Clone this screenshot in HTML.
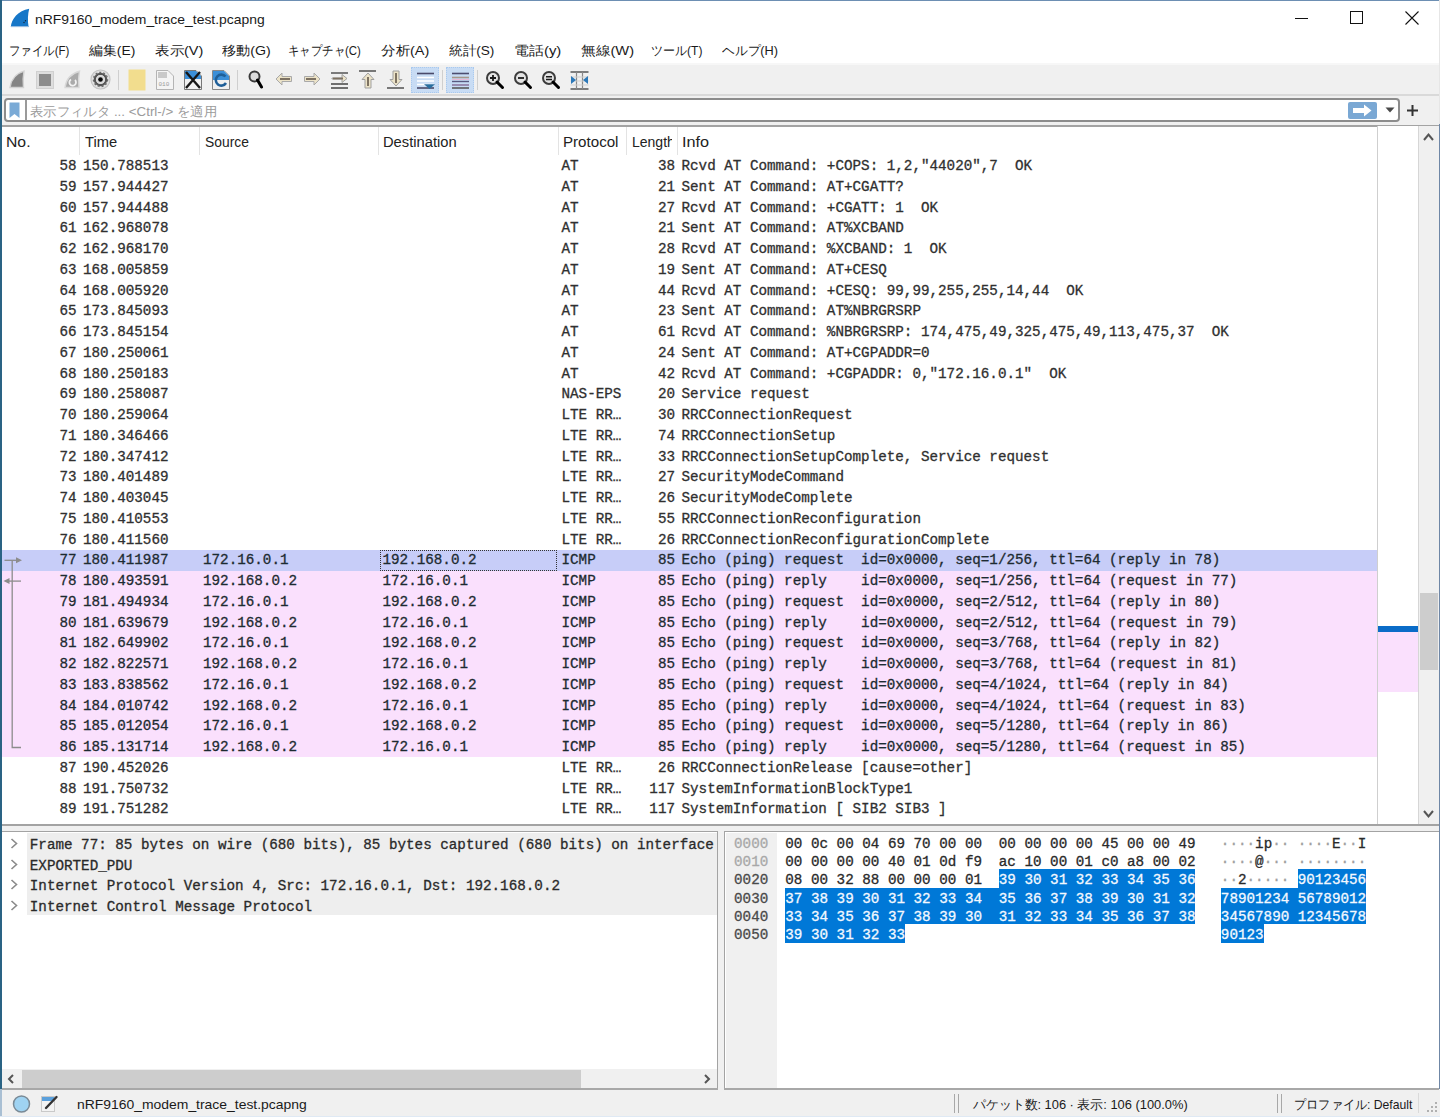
<!DOCTYPE html>
<html><head><meta charset="utf-8"><style>
*{margin:0;padding:0;box-sizing:border-box}
html,body{width:1440px;height:1117px;overflow:hidden;background:#f0f0f0;font-family:"Liberation Sans",sans-serif;color:#000}
.a{position:absolute}
.m{font-family:"Liberation Mono",monospace;font-size:14.25px;white-space:pre;line-height:20px;color:#1c1c1c;-webkit-text-stroke:0.3px currentColor}
.s{white-space:pre}
</style></head><body>

<div class="a" style="left:0;top:0;width:1440px;height:63px;background:#fff"></div>
<div class="a" style="left:0;top:0;width:1440px;height:1px;background:#6d8fb3"></div>
<svg class="a" style="left:10px;top:8px" width="21" height="20" viewBox="0 0 21 20"><path d="M0.8 19 C1.5 11 8 2.5 19.2 0.8 C17.8 6 17.5 13 18.6 19 Z" fill="#1677c8"/><path d="M1 18.6 H18.5" stroke="#9cc0e4" stroke-width="1.1"/><circle cx="14" cy="14.5" r="0.7" fill="#123"/><circle cx="15.5" cy="12.8" r="0.7" fill="#123"/></svg>
<div id="t1" class="a s" style="left:34.93px;top:10.5px;font-size:13px;line-height:18px;color:#1a1a1a;transform:scaleX(1.0704);transform-origin:0 0;">nRF9160_modem_trace_test.pcapng</div>
<div class="a" style="left:1295px;top:17.5px;width:13px;height:1.2px;background:#111"></div>
<div class="a" style="left:1350px;top:11px;width:13px;height:13px;border:1px solid #111"></div>
<svg class="a" style="left:1405px;top:11px" width="14" height="14" viewBox="0 0 14 14"><path d="M0.5 0.5 L13.5 13.5 M13.5 0.5 L0.5 13.5" stroke="#111" stroke-width="1.1"/></svg>
<div id="t2" class="a s" style="left:9.12px;top:42px;font-size:13px;line-height:18px;color:#1a1a1a;transform:scaleX(0.8806);transform-origin:0 0;">ファイル(F)</div>
<div id="t3" class="a s" style="left:89.00px;top:42px;font-size:13px;line-height:18px;color:#1a1a1a;transform:scaleX(1.0698);transform-origin:0 0;">編集(E)</div>
<div id="t4" class="a s" style="left:155.00px;top:42px;font-size:13px;line-height:18px;color:#1a1a1a;transform:scaleX(1.1163);transform-origin:0 0;">表示(V)</div>
<div id="t5" class="a s" style="left:222.00px;top:42px;font-size:13px;line-height:18px;color:#1a1a1a;transform:scaleX(1.0909);transform-origin:0 0;">移動(G)</div>
<div id="t6" class="a s" style="left:288.12px;top:42px;font-size:13px;line-height:18px;color:#1a1a1a;transform:scaleX(0.8780);transform-origin:0 0;">キャプチャ(C)</div>
<div id="t7" class="a s" style="left:381.00px;top:42px;font-size:13px;line-height:18px;color:#1a1a1a;transform:scaleX(1.1163);transform-origin:0 0;">分析(A)</div>
<div id="t8" class="a s" style="left:449.00px;top:42px;font-size:13px;line-height:18px;color:#1a1a1a;transform:scaleX(1.0465);transform-origin:0 0;">統計(S)</div>
<div id="t9" class="a s" style="left:513.85px;top:42px;font-size:13px;line-height:18px;color:#1a1a1a;transform:scaleX(1.1500);transform-origin:0 0;">電話(y)</div>
<div id="t10" class="a s" style="left:581.00px;top:42px;font-size:13px;line-height:18px;color:#1a1a1a;transform:scaleX(1.1304);transform-origin:0 0;">無線(W)</div>
<div id="t11" class="a s" style="left:651.07px;top:42px;font-size:13px;line-height:18px;color:#1a1a1a;transform:scaleX(0.9259);transform-origin:0 0;">ツール(T)</div>
<div id="t12" class="a s" style="left:722.00px;top:42px;font-size:13px;line-height:18px;color:#1a1a1a;transform:scaleX(0.9825);transform-origin:0 0;">ヘルプ(H)</div>
<div class="a" style="left:0;top:63px;width:1440px;height:33px;background:#f0f0f0"></div>
<div class="a" style="left:0;top:63px;width:1440px;height:2px;background:#f7f7f7"></div>
<div class="a" style="left:0;top:94px;width:1440px;height:2px;background:#d9d9d9"></div>
<svg class="a" style="left:8px;top:70px" width="19" height="19" viewBox="0 0 19 19"><path d="M2 17.5 C3 10 8 3.5 16 1.2 C15 6.5 14.8 12 15.5 17.5 Z" fill="#858585" stroke="#d2d2d2" stroke-width="1.4"/></svg>
<svg class="a" style="left:36px;top:71px" width="18" height="18" viewBox="0 0 18 18"><rect x="0.5" y="0.5" width="17" height="17" fill="#dedede" stroke="#d0d0d0"/><rect x="3" y="3" width="12" height="12" fill="#8c8c8c"/></svg>
<svg class="a" style="left:63px;top:70px" width="19" height="19" viewBox="0 0 19 19"><path d="M2 17.5 C3 10 8 3.5 16.5 1.2 C15.5 6.5 15.3 12 16 17.5 Z" fill="#aaaaaa" stroke="#d8d8d8" stroke-width="1.4"/><path d="M12 10 A3.3 3.3 0 1 1 8 9.5" fill="none" stroke="#f2f2f2" stroke-width="1.8"/></svg>
<svg class="a" style="left:90px;top:69px" width="21" height="21" viewBox="0 0 21 21"><circle cx="10.5" cy="10.5" r="9.5" fill="#e2e2e2" stroke="#c4c4c4" stroke-width="1.2"/><circle cx="10.5" cy="10.5" r="5.7" fill="none" stroke="#575757" stroke-width="2.2"/><circle cx="10.5" cy="10.5" r="7.1" fill="none" stroke="#6a6a6a" stroke-width="1.3" stroke-dasharray="2 2"/><circle cx="10.5" cy="10.5" r="4.4" fill="#dadada"/><circle cx="10.5" cy="10.5" r="2.3" fill="#080808"/></svg>
<div class="a" style="left:118px;top:70px;width:1px;height:20px;background:#cfcfcf"></div>
<svg class="a" style="left:128px;top:69px" width="18" height="22" viewBox="0 0 18 22"><rect x="0.5" y="0.5" width="17" height="21" fill="#f2dd8e"/></svg>
<svg class="a" style="left:156px;top:70px" width="18" height="20" viewBox="0 0 18 20"><path d="M0.5 0.5 H12 L17.5 6 V19.5 H0.5 Z" fill="#f4f4f4" stroke="#b4b4b4"/><path d="M2 2 H11 V8 H2Z" fill="#c9c9c9"/><text x="2.5" y="16" font-family="Liberation Mono" font-size="6" fill="#9a9a9a">010</text></svg>
<svg class="a" style="left:184px;top:70px" width="18" height="20" viewBox="0 0 18 20"><path d="M0.5 0.5 H12 L17.5 6 V19.5 H0.5 Z" fill="#f0f0f0" stroke="#777"/><path d="M1 1 H12 L17 6 V9 H1Z" fill="#3b8fd8"/><path d="M2 2 L16 18 M16 2 L2 18" stroke="#161616" stroke-width="2.4"/></svg>
<svg class="a" style="left:212px;top:70px" width="18" height="20" viewBox="0 0 18 20"><path d="M0.5 0.5 H12 L17.5 6 V19.5 H0.5 Z" fill="#f0f0f0" stroke="#888"/><path d="M1 1 H12 L17 6 V10 H1Z" fill="#3b8fd8"/><path d="M13.5 6.5 A5.5 5.5 0 1 0 14 13" fill="none" stroke="#1f5f98" stroke-width="2.6"/></svg>
<div class="a" style="left:237px;top:70px;width:1px;height:20px;background:#cfcfcf"></div>
<svg class="a" style="left:248px;top:70px" width="16" height="19" viewBox="0 0 16 19"><circle cx="6.5" cy="6.5" r="5" fill="#dcdcdc" stroke="#3a3a3a" stroke-width="2"/><path d="M9.5 10 L13.5 17" stroke="#000" stroke-width="3" stroke-linecap="round"/></svg>
<svg class="a" style="left:275px;top:72px" width="18" height="14" viewBox="0 0 18 14"><path d="M1 7 L7 1 V4.5 H16.5 V9.5 H7 V13 Z" fill="#ece3c8" stroke="#a9a9a9"/><path d="M5 7 H15" stroke="#7d7262" stroke-width="2"/></svg>
<svg class="a" style="left:303px;top:72px" width="18" height="14" viewBox="0 0 18 14"><path d="M17 7 L11 1 V4.5 H1.5 V9.5 H11 V13 Z" fill="#ece3c8" stroke="#a9a9a9"/><path d="M3 7 H13" stroke="#7d7262" stroke-width="2"/></svg>
<svg class="a" style="left:330px;top:71px" width="20" height="19" viewBox="0 0 20 19"><path d="M1 2 H18" stroke="#555" stroke-width="1.5"/><path d="M1 13 H18 M1 17 H18" stroke="#444" stroke-width="1.6"/><path d="M2 7 H12 V3.5 L17 7.5 L12 11.5 V8 H2Z" fill="#ece3c8" stroke="#a0a0a0"/><path d="M3 7.5 H13" stroke="#7d7262" stroke-width="1.8"/></svg>
<svg class="a" style="left:359px;top:70px" width="18" height="19" viewBox="0 0 18 19"><path d="M0 1 H17" stroke="#444" stroke-width="1.4"/><path d="M9 3 L15 9.5 H12 V18 H6 V9.5 H3 Z" fill="#ece3c8" stroke="#a0a0a0"/><path d="M9 7 V16" stroke="#7d7262" stroke-width="2"/></svg>
<svg class="a" style="left:387px;top:70px" width="18" height="19" viewBox="0 0 18 19"><path d="M0 18 H17" stroke="#444" stroke-width="1.4"/><path d="M9 16 L15 9.5 H12 V1 H6 V9.5 H3 Z" fill="#ece3c8" stroke="#a0a0a0"/><path d="M9 3 V13" stroke="#7d7262" stroke-width="2"/></svg>
<div class="a" style="left:411px;top:67px;width:28px;height:26px;background:#c8dcf4;border:1px dotted #a9c9ee"></div>
<svg class="a" style="left:416px;top:71px" width="19" height="19" viewBox="0 0 19 19"><path d="M1 2.5 H18" stroke="#4a4a6a" stroke-width="1.6"/><path d="M1 6.5 H18 M1 10 H18 M1 13.5 H18" stroke="#ffffff" stroke-width="1.6"/><path d="M1 17 H18" stroke="#4a4a6a" stroke-width="1.6"/><path d="M10 14 L13.5 17 L17 14 Z" fill="#2a6fa0" stroke="#2a6fa0" stroke-width="1.5"/></svg>
<div class="a" style="left:442px;top:70px;width:1px;height:20px;background:#cfcfcf"></div>
<div class="a" style="left:446px;top:67px;width:28px;height:26px;background:#c8dcf4;border:1px dotted #a9c9ee"></div>
<svg class="a" style="left:451px;top:71px" width="19" height="19" viewBox="0 0 19 19"><path d="M1 2.5 H18" stroke="#4d4d70" stroke-width="1.6"/><path d="M1 6.5 H18" stroke="#a6988c" stroke-width="1.6"/><path d="M1 8.5 H18" stroke="#e9b9d9" stroke-width="1"/><path d="M1 10.5 H18" stroke="#5a5a80" stroke-width="1.4"/><path d="M1 14 H18" stroke="#8c7aa0" stroke-width="1.6"/><path d="M1 17 H18" stroke="#5a5a5a" stroke-width="1.6"/></svg>
<div class="a" style="left:477px;top:70px;width:1px;height:20px;background:#cfcfcf"></div>
<svg class="a" style="left:485px;top:70px" width="20" height="20" viewBox="0 0 20 20"><circle cx="8" cy="8" r="6" fill="#e4e4e4" stroke="#3c3c3c" stroke-width="2"/><path d="M12 12 L17.5 17.5" stroke="#000" stroke-width="3" stroke-linecap="round"/><path d="M5 8 H11 M8 5 V11" stroke="#1a1a1a" stroke-width="1.8"/></svg>
<svg class="a" style="left:513px;top:70px" width="20" height="20" viewBox="0 0 20 20"><circle cx="8" cy="8" r="6" fill="#e4e4e4" stroke="#3c3c3c" stroke-width="2"/><path d="M12 12 L17.5 17.5" stroke="#000" stroke-width="3" stroke-linecap="round"/><path d="M5 8 H11" stroke="#1a1a1a" stroke-width="1.8"/></svg>
<svg class="a" style="left:541px;top:70px" width="20" height="20" viewBox="0 0 20 20"><circle cx="8" cy="8" r="6" fill="#e4e4e4" stroke="#3c3c3c" stroke-width="2"/><path d="M12 12 L17.5 17.5" stroke="#000" stroke-width="3" stroke-linecap="round"/><path d="M5 6.8 H11 M5 9.4 H11" stroke="#1a1a1a" stroke-width="1.5"/></svg>
<svg class="a" style="left:570px;top:71px" width="19" height="19" viewBox="0 0 19 19"><path d="M0.5 1 H18.5 M0.5 18 H18.5" stroke="#555" stroke-width="1.6"/><path d="M6.5 1 V18 M12.5 1 V18" stroke="#888" stroke-width="1.2"/><path d="M0.5 6 H18.5 M0.5 10 H18.5 M0.5 14 H18.5" stroke="#cfcfcf" stroke-width="1"/><path d="M1 5 L6 9 L1 13Z M18 5 L13 9 L18 13Z" fill="#2c78b8"/></svg>
<div class="a" style="left:4px;top:98px;width:1396px;height:24px;background:#fff;border:2px solid #8c8c8c;border-radius:4px"></div>
<svg class="a" style="left:9px;top:102px" width="11" height="17" viewBox="0 0 11 17"><path d="M0.5 0.5 H10.5 V16 L5.5 12 L0.5 16 Z" fill="#7aaad6"/></svg>
<div class="a" style="left:25px;top:100px;width:2px;height:20px;background:#9a9a9a"></div>
<div id="t13" class="a s" style="left:29.97px;top:103px;font-size:13px;line-height:18px;color:#9b9b9b;transform:scaleX(1.0278);transform-origin:0 0;">表示フィルタ ... &lt;Ctrl-/&gt; を適用</div>
<div class="a" style="left:1348px;top:102px;width:29px;height:17px;background:#7aa8d4;border-radius:2px"></div>
<svg class="a" style="left:1352px;top:104px" width="21" height="13" viewBox="0 0 21 13"><path d="M1 4 H12 V0.5 L19.5 6.5 L12 12.5 V9 H1 Z" fill="#fff"/></svg>
<svg class="a" style="left:1385px;top:107px" width="10" height="6" viewBox="0 0 10 6"><path d="M0.5 0.5 H9.5 L5 5.5Z" fill="#4a4a4a"/></svg>
<svg class="a" style="left:1407px;top:105px" width="11" height="11" viewBox="0 0 11 11"><path d="M5.5 0 V11 M0 5.5 H11" stroke="#333" stroke-width="2"/></svg>
<div class="a" style="left:2px;top:125px;width:1437px;height:701px;background:#fff"></div>
<div class="a" style="left:2px;top:124.5px;width:1437px;height:2px;background:#a3a3a3"></div>
<div class="a" style="left:2px;top:824px;width:1437px;height:2px;background:#a3a3a3"></div>
<div class="a" style="left:79px;top:127px;width:1px;height:28px;background:#e3e3e3"></div>
<div class="a" style="left:198.5px;top:127px;width:1px;height:28px;background:#e3e3e3"></div>
<div class="a" style="left:378px;top:127px;width:1px;height:28px;background:#e3e3e3"></div>
<div class="a" style="left:557.5px;top:127px;width:1px;height:28px;background:#e3e3e3"></div>
<div class="a" style="left:625.5px;top:127px;width:1px;height:28px;background:#e3e3e3"></div>
<div class="a" style="left:677px;top:127px;width:1px;height:28px;background:#e3e3e3"></div>
<div id="t14" class="a s" style="left:5.88px;top:132px;font-size:14px;line-height:20px;color:#222;transform:scaleX(1.1250);transform-origin:0 0;">No.</div>
<div id="t15" class="a s" style="left:84.50px;top:132px;font-size:14px;line-height:20px;color:#222;transform:scaleX(1.0500);transform-origin:0 0;">Time</div>
<div id="t16" class="a s" style="left:204.50px;top:132px;font-size:14px;line-height:20px;color:#222;transform:scaleX(0.9886);transform-origin:0 0;">Source</div>
<div id="t17" class="a s" style="left:383.16px;top:132px;font-size:14px;line-height:20px;color:#222;transform:scaleX(1.0507);transform-origin:0 0;">Destination</div>
<div id="t18" class="a s" style="left:562.80px;top:132px;font-size:14px;line-height:20px;color:#222;transform:scaleX(1.0800);transform-origin:0 0;">Protocol</div>
<div id="t19" class="a s" style="left:632.00px;top:132px;font-size:14px;line-height:20px;color:#222;width:40px;overflow:hidden;">Length</div>
<div id="t20" class="a s" style="left:681.84px;top:132px;font-size:14px;line-height:20px;color:#222;transform:scaleX(1.1591);transform-origin:0 0;">Info</div>
<div class="a m" style="right:1363.50px;top:156.05px;color:#303030">58</div>
<div class="a m" style="left:83.00px;top:156.05px;color:#303030">150.788513</div>
<div class="a m" style="left:561.50px;top:156.05px;color:#303030">AT</div>
<div class="a m" style="right:765.00px;top:156.05px;color:#303030">38</div>
<div class="a m" style="left:681.50px;top:156.05px;color:#303030">Rcvd AT Command: +COPS: 1,2,&quot;44020&quot;,7  OK</div>
<div class="a m" style="right:1363.50px;top:176.80px;color:#303030">59</div>
<div class="a m" style="left:83.00px;top:176.80px;color:#303030">157.944427</div>
<div class="a m" style="left:561.50px;top:176.80px;color:#303030">AT</div>
<div class="a m" style="right:765.00px;top:176.80px;color:#303030">21</div>
<div class="a m" style="left:681.50px;top:176.80px;color:#303030">Sent AT Command: AT+CGATT?</div>
<div class="a m" style="right:1363.50px;top:197.55px;color:#303030">60</div>
<div class="a m" style="left:83.00px;top:197.55px;color:#303030">157.944488</div>
<div class="a m" style="left:561.50px;top:197.55px;color:#303030">AT</div>
<div class="a m" style="right:765.00px;top:197.55px;color:#303030">27</div>
<div class="a m" style="left:681.50px;top:197.55px;color:#303030">Rcvd AT Command: +CGATT: 1  OK</div>
<div class="a m" style="right:1363.50px;top:218.30px;color:#303030">61</div>
<div class="a m" style="left:83.00px;top:218.30px;color:#303030">162.968078</div>
<div class="a m" style="left:561.50px;top:218.30px;color:#303030">AT</div>
<div class="a m" style="right:765.00px;top:218.30px;color:#303030">21</div>
<div class="a m" style="left:681.50px;top:218.30px;color:#303030">Sent AT Command: AT%XCBAND</div>
<div class="a m" style="right:1363.50px;top:239.05px;color:#303030">62</div>
<div class="a m" style="left:83.00px;top:239.05px;color:#303030">162.968170</div>
<div class="a m" style="left:561.50px;top:239.05px;color:#303030">AT</div>
<div class="a m" style="right:765.00px;top:239.05px;color:#303030">28</div>
<div class="a m" style="left:681.50px;top:239.05px;color:#303030">Rcvd AT Command: %XCBAND: 1  OK</div>
<div class="a m" style="right:1363.50px;top:259.80px;color:#303030">63</div>
<div class="a m" style="left:83.00px;top:259.80px;color:#303030">168.005859</div>
<div class="a m" style="left:561.50px;top:259.80px;color:#303030">AT</div>
<div class="a m" style="right:765.00px;top:259.80px;color:#303030">19</div>
<div class="a m" style="left:681.50px;top:259.80px;color:#303030">Sent AT Command: AT+CESQ</div>
<div class="a m" style="right:1363.50px;top:280.55px;color:#303030">64</div>
<div class="a m" style="left:83.00px;top:280.55px;color:#303030">168.005920</div>
<div class="a m" style="left:561.50px;top:280.55px;color:#303030">AT</div>
<div class="a m" style="right:765.00px;top:280.55px;color:#303030">44</div>
<div class="a m" style="left:681.50px;top:280.55px;color:#303030">Rcvd AT Command: +CESQ: 99,99,255,255,14,44  OK</div>
<div class="a m" style="right:1363.50px;top:301.30px;color:#303030">65</div>
<div class="a m" style="left:83.00px;top:301.30px;color:#303030">173.845093</div>
<div class="a m" style="left:561.50px;top:301.30px;color:#303030">AT</div>
<div class="a m" style="right:765.00px;top:301.30px;color:#303030">23</div>
<div class="a m" style="left:681.50px;top:301.30px;color:#303030">Sent AT Command: AT%NBRGRSRP</div>
<div class="a m" style="right:1363.50px;top:322.05px;color:#303030">66</div>
<div class="a m" style="left:83.00px;top:322.05px;color:#303030">173.845154</div>
<div class="a m" style="left:561.50px;top:322.05px;color:#303030">AT</div>
<div class="a m" style="right:765.00px;top:322.05px;color:#303030">61</div>
<div class="a m" style="left:681.50px;top:322.05px;color:#303030">Rcvd AT Command: %NBRGRSRP: 174,475,49,325,475,49,113,475,37  OK</div>
<div class="a m" style="right:1363.50px;top:342.80px;color:#303030">67</div>
<div class="a m" style="left:83.00px;top:342.80px;color:#303030">180.250061</div>
<div class="a m" style="left:561.50px;top:342.80px;color:#303030">AT</div>
<div class="a m" style="right:765.00px;top:342.80px;color:#303030">24</div>
<div class="a m" style="left:681.50px;top:342.80px;color:#303030">Sent AT Command: AT+CGPADDR=0</div>
<div class="a m" style="right:1363.50px;top:363.55px;color:#303030">68</div>
<div class="a m" style="left:83.00px;top:363.55px;color:#303030">180.250183</div>
<div class="a m" style="left:561.50px;top:363.55px;color:#303030">AT</div>
<div class="a m" style="right:765.00px;top:363.55px;color:#303030">42</div>
<div class="a m" style="left:681.50px;top:363.55px;color:#303030">Rcvd AT Command: +CGPADDR: 0,&quot;172.16.0.1&quot;  OK</div>
<div class="a m" style="right:1363.50px;top:384.30px;color:#303030">69</div>
<div class="a m" style="left:83.00px;top:384.30px;color:#303030">180.258087</div>
<div class="a m" style="left:561.50px;top:384.30px;color:#303030">NAS-EPS</div>
<div class="a m" style="right:765.00px;top:384.30px;color:#303030">20</div>
<div class="a m" style="left:681.50px;top:384.30px;color:#303030">Service request</div>
<div class="a m" style="right:1363.50px;top:405.05px;color:#303030">70</div>
<div class="a m" style="left:83.00px;top:405.05px;color:#303030">180.259064</div>
<div class="a m" style="left:561.50px;top:405.05px;color:#303030">LTE RR…</div>
<div class="a m" style="right:765.00px;top:405.05px;color:#303030">30</div>
<div class="a m" style="left:681.50px;top:405.05px;color:#303030">RRCConnectionRequest</div>
<div class="a m" style="right:1363.50px;top:425.80px;color:#303030">71</div>
<div class="a m" style="left:83.00px;top:425.80px;color:#303030">180.346466</div>
<div class="a m" style="left:561.50px;top:425.80px;color:#303030">LTE RR…</div>
<div class="a m" style="right:765.00px;top:425.80px;color:#303030">74</div>
<div class="a m" style="left:681.50px;top:425.80px;color:#303030">RRCConnectionSetup</div>
<div class="a m" style="right:1363.50px;top:446.55px;color:#303030">72</div>
<div class="a m" style="left:83.00px;top:446.55px;color:#303030">180.347412</div>
<div class="a m" style="left:561.50px;top:446.55px;color:#303030">LTE RR…</div>
<div class="a m" style="right:765.00px;top:446.55px;color:#303030">33</div>
<div class="a m" style="left:681.50px;top:446.55px;color:#303030">RRCConnectionSetupComplete, Service request</div>
<div class="a m" style="right:1363.50px;top:467.30px;color:#303030">73</div>
<div class="a m" style="left:83.00px;top:467.30px;color:#303030">180.401489</div>
<div class="a m" style="left:561.50px;top:467.30px;color:#303030">LTE RR…</div>
<div class="a m" style="right:765.00px;top:467.30px;color:#303030">27</div>
<div class="a m" style="left:681.50px;top:467.30px;color:#303030">SecurityModeCommand</div>
<div class="a m" style="right:1363.50px;top:488.05px;color:#303030">74</div>
<div class="a m" style="left:83.00px;top:488.05px;color:#303030">180.403045</div>
<div class="a m" style="left:561.50px;top:488.05px;color:#303030">LTE RR…</div>
<div class="a m" style="right:765.00px;top:488.05px;color:#303030">26</div>
<div class="a m" style="left:681.50px;top:488.05px;color:#303030">SecurityModeComplete</div>
<div class="a m" style="right:1363.50px;top:508.80px;color:#303030">75</div>
<div class="a m" style="left:83.00px;top:508.80px;color:#303030">180.410553</div>
<div class="a m" style="left:561.50px;top:508.80px;color:#303030">LTE RR…</div>
<div class="a m" style="right:765.00px;top:508.80px;color:#303030">55</div>
<div class="a m" style="left:681.50px;top:508.80px;color:#303030">RRCConnectionReconfiguration</div>
<div class="a m" style="right:1363.50px;top:529.55px;color:#303030">76</div>
<div class="a m" style="left:83.00px;top:529.55px;color:#303030">180.411560</div>
<div class="a m" style="left:561.50px;top:529.55px;color:#303030">LTE RR…</div>
<div class="a m" style="right:765.00px;top:529.55px;color:#303030">26</div>
<div class="a m" style="left:681.50px;top:529.55px;color:#303030">RRCConnectionReconfigurationComplete</div>
<div class="a" style="left:2px;top:549.75px;width:1375px;height:20.75px;background:#c7cdf8"></div>
<div class="a m" style="right:1363.50px;top:550.30px;color:#1d2b31">77</div>
<div class="a m" style="left:83.00px;top:550.30px;color:#1d2b31">180.411987</div>
<div class="a m" style="left:203.00px;top:550.30px;color:#1d2b31">172.16.0.1</div>
<div class="a m" style="left:382.50px;top:550.30px;color:#1d2b31">192.168.0.2</div>
<div class="a m" style="left:561.50px;top:550.30px;color:#1d2b31">ICMP</div>
<div class="a m" style="right:765.00px;top:550.30px;color:#1d2b31">85</div>
<div class="a m" style="left:681.50px;top:550.30px;color:#1d2b31">Echo (ping) request  id=0x0000, seq=1/256, ttl=64 (reply in 78)</div>
<div class="a" style="left:2px;top:570.50px;width:1375px;height:20.75px;background:#fae0fd"></div>
<div class="a m" style="right:1363.50px;top:571.05px;color:#1d2b31">78</div>
<div class="a m" style="left:83.00px;top:571.05px;color:#1d2b31">180.493591</div>
<div class="a m" style="left:203.00px;top:571.05px;color:#1d2b31">192.168.0.2</div>
<div class="a m" style="left:382.50px;top:571.05px;color:#1d2b31">172.16.0.1</div>
<div class="a m" style="left:561.50px;top:571.05px;color:#1d2b31">ICMP</div>
<div class="a m" style="right:765.00px;top:571.05px;color:#1d2b31">85</div>
<div class="a m" style="left:681.50px;top:571.05px;color:#1d2b31">Echo (ping) reply    id=0x0000, seq=1/256, ttl=64 (request in 77)</div>
<div class="a" style="left:2px;top:591.25px;width:1375px;height:20.75px;background:#fae0fd"></div>
<div class="a m" style="right:1363.50px;top:591.80px;color:#1d2b31">79</div>
<div class="a m" style="left:83.00px;top:591.80px;color:#1d2b31">181.494934</div>
<div class="a m" style="left:203.00px;top:591.80px;color:#1d2b31">172.16.0.1</div>
<div class="a m" style="left:382.50px;top:591.80px;color:#1d2b31">192.168.0.2</div>
<div class="a m" style="left:561.50px;top:591.80px;color:#1d2b31">ICMP</div>
<div class="a m" style="right:765.00px;top:591.80px;color:#1d2b31">85</div>
<div class="a m" style="left:681.50px;top:591.80px;color:#1d2b31">Echo (ping) request  id=0x0000, seq=2/512, ttl=64 (reply in 80)</div>
<div class="a" style="left:2px;top:612.00px;width:1375px;height:20.75px;background:#fae0fd"></div>
<div class="a m" style="right:1363.50px;top:612.55px;color:#1d2b31">80</div>
<div class="a m" style="left:83.00px;top:612.55px;color:#1d2b31">181.639679</div>
<div class="a m" style="left:203.00px;top:612.55px;color:#1d2b31">192.168.0.2</div>
<div class="a m" style="left:382.50px;top:612.55px;color:#1d2b31">172.16.0.1</div>
<div class="a m" style="left:561.50px;top:612.55px;color:#1d2b31">ICMP</div>
<div class="a m" style="right:765.00px;top:612.55px;color:#1d2b31">85</div>
<div class="a m" style="left:681.50px;top:612.55px;color:#1d2b31">Echo (ping) reply    id=0x0000, seq=2/512, ttl=64 (request in 79)</div>
<div class="a" style="left:2px;top:632.75px;width:1375px;height:20.75px;background:#fae0fd"></div>
<div class="a m" style="right:1363.50px;top:633.30px;color:#1d2b31">81</div>
<div class="a m" style="left:83.00px;top:633.30px;color:#1d2b31">182.649902</div>
<div class="a m" style="left:203.00px;top:633.30px;color:#1d2b31">172.16.0.1</div>
<div class="a m" style="left:382.50px;top:633.30px;color:#1d2b31">192.168.0.2</div>
<div class="a m" style="left:561.50px;top:633.30px;color:#1d2b31">ICMP</div>
<div class="a m" style="right:765.00px;top:633.30px;color:#1d2b31">85</div>
<div class="a m" style="left:681.50px;top:633.30px;color:#1d2b31">Echo (ping) request  id=0x0000, seq=3/768, ttl=64 (reply in 82)</div>
<div class="a" style="left:2px;top:653.50px;width:1375px;height:20.75px;background:#fae0fd"></div>
<div class="a m" style="right:1363.50px;top:654.05px;color:#1d2b31">82</div>
<div class="a m" style="left:83.00px;top:654.05px;color:#1d2b31">182.822571</div>
<div class="a m" style="left:203.00px;top:654.05px;color:#1d2b31">192.168.0.2</div>
<div class="a m" style="left:382.50px;top:654.05px;color:#1d2b31">172.16.0.1</div>
<div class="a m" style="left:561.50px;top:654.05px;color:#1d2b31">ICMP</div>
<div class="a m" style="right:765.00px;top:654.05px;color:#1d2b31">85</div>
<div class="a m" style="left:681.50px;top:654.05px;color:#1d2b31">Echo (ping) reply    id=0x0000, seq=3/768, ttl=64 (request in 81)</div>
<div class="a" style="left:2px;top:674.25px;width:1375px;height:20.75px;background:#fae0fd"></div>
<div class="a m" style="right:1363.50px;top:674.80px;color:#1d2b31">83</div>
<div class="a m" style="left:83.00px;top:674.80px;color:#1d2b31">183.838562</div>
<div class="a m" style="left:203.00px;top:674.80px;color:#1d2b31">172.16.0.1</div>
<div class="a m" style="left:382.50px;top:674.80px;color:#1d2b31">192.168.0.2</div>
<div class="a m" style="left:561.50px;top:674.80px;color:#1d2b31">ICMP</div>
<div class="a m" style="right:765.00px;top:674.80px;color:#1d2b31">85</div>
<div class="a m" style="left:681.50px;top:674.80px;color:#1d2b31">Echo (ping) request  id=0x0000, seq=4/1024, ttl=64 (reply in 84)</div>
<div class="a" style="left:2px;top:695.00px;width:1375px;height:20.75px;background:#fae0fd"></div>
<div class="a m" style="right:1363.50px;top:695.55px;color:#1d2b31">84</div>
<div class="a m" style="left:83.00px;top:695.55px;color:#1d2b31">184.010742</div>
<div class="a m" style="left:203.00px;top:695.55px;color:#1d2b31">192.168.0.2</div>
<div class="a m" style="left:382.50px;top:695.55px;color:#1d2b31">172.16.0.1</div>
<div class="a m" style="left:561.50px;top:695.55px;color:#1d2b31">ICMP</div>
<div class="a m" style="right:765.00px;top:695.55px;color:#1d2b31">85</div>
<div class="a m" style="left:681.50px;top:695.55px;color:#1d2b31">Echo (ping) reply    id=0x0000, seq=4/1024, ttl=64 (request in 83)</div>
<div class="a" style="left:2px;top:715.75px;width:1375px;height:20.75px;background:#fae0fd"></div>
<div class="a m" style="right:1363.50px;top:716.30px;color:#1d2b31">85</div>
<div class="a m" style="left:83.00px;top:716.30px;color:#1d2b31">185.012054</div>
<div class="a m" style="left:203.00px;top:716.30px;color:#1d2b31">172.16.0.1</div>
<div class="a m" style="left:382.50px;top:716.30px;color:#1d2b31">192.168.0.2</div>
<div class="a m" style="left:561.50px;top:716.30px;color:#1d2b31">ICMP</div>
<div class="a m" style="right:765.00px;top:716.30px;color:#1d2b31">85</div>
<div class="a m" style="left:681.50px;top:716.30px;color:#1d2b31">Echo (ping) request  id=0x0000, seq=5/1280, ttl=64 (reply in 86)</div>
<div class="a" style="left:2px;top:736.50px;width:1375px;height:20.75px;background:#fae0fd"></div>
<div class="a m" style="right:1363.50px;top:737.05px;color:#1d2b31">86</div>
<div class="a m" style="left:83.00px;top:737.05px;color:#1d2b31">185.131714</div>
<div class="a m" style="left:203.00px;top:737.05px;color:#1d2b31">192.168.0.2</div>
<div class="a m" style="left:382.50px;top:737.05px;color:#1d2b31">172.16.0.1</div>
<div class="a m" style="left:561.50px;top:737.05px;color:#1d2b31">ICMP</div>
<div class="a m" style="right:765.00px;top:737.05px;color:#1d2b31">85</div>
<div class="a m" style="left:681.50px;top:737.05px;color:#1d2b31">Echo (ping) reply    id=0x0000, seq=5/1280, ttl=64 (request in 85)</div>
<div class="a m" style="right:1363.50px;top:757.80px;color:#303030">87</div>
<div class="a m" style="left:83.00px;top:757.80px;color:#303030">190.452026</div>
<div class="a m" style="left:561.50px;top:757.80px;color:#303030">LTE RR…</div>
<div class="a m" style="right:765.00px;top:757.80px;color:#303030">26</div>
<div class="a m" style="left:681.50px;top:757.80px;color:#303030">RRCConnectionRelease [cause=other]</div>
<div class="a m" style="right:1363.50px;top:778.55px;color:#303030">88</div>
<div class="a m" style="left:83.00px;top:778.55px;color:#303030">191.750732</div>
<div class="a m" style="left:561.50px;top:778.55px;color:#303030">LTE RR…</div>
<div class="a m" style="right:765.00px;top:778.55px;color:#303030">117</div>
<div class="a m" style="left:681.50px;top:778.55px;color:#303030">SystemInformationBlockType1</div>
<div class="a m" style="right:1363.50px;top:799.30px;color:#303030">89</div>
<div class="a m" style="left:83.00px;top:799.30px;color:#303030">191.751282</div>
<div class="a m" style="left:561.50px;top:799.30px;color:#303030">LTE RR…</div>
<div class="a m" style="right:765.00px;top:799.30px;color:#303030">117</div>
<div class="a m" style="left:681.50px;top:799.30px;color:#303030">SystemInformation [ SIB2 SIB3 ]</div>
<div class="a" style="left:380px;top:550.25px;width:177px;height:20.25px;border:1px dotted #333"></div>
<svg class="a" style="left:0px;top:549.75px" width="24" height="200" viewBox="0 0 24 200"><path d="M4.5 10.3 H19" stroke="#8c8c8c" stroke-width="1.3"/><path d="M16 7.3 L22 10.3 L16 13.3 Z" fill="#8c8c8c"/><path d="M12.2 10.3 V197.5 H21" fill="none" stroke="#8c8c8c" stroke-width="1.3"/><path d="M7 31.1 H21" stroke="#8c8c8c" stroke-width="1.3"/><path d="M3.5 31.1 L9.5 28.1 L9.5 34.1 Z" fill="#8c8c8c"/></svg>
<div class="a" style="left:1377px;top:126px;width:1px;height:698px;background:#cfcfcf"></div>
<div class="a" style="left:1378px;top:126px;width:40px;height:698px;background:#fff"></div>
<div class="a" style="left:1378px;top:626px;width:40px;height:6px;background:#0a6cc8"></div>
<div class="a" style="left:1378px;top:632px;width:40px;height:60px;background:#fae0fd"></div>
<div class="a" style="left:1417.5px;top:126px;width:1.5px;height:698px;background:#d6d6d6"></div>
<div class="a" style="left:1419px;top:126px;width:20px;height:698px;background:#f0f0f0"></div>
<div class="a" style="left:1420px;top:592.5px;width:18px;height:77px;background:#cdcdcd"></div>
<svg class="a" style="left:1423px;top:132px" width="11" height="10" viewBox="0 0 11 10"><path d="M1 8 L5.5 2.5 L10 8" fill="none" stroke="#555" stroke-width="2"/></svg>
<svg class="a" style="left:1423px;top:809px" width="11" height="10" viewBox="0 0 11 10"><path d="M1 2 L5.5 7.5 L10 2" fill="none" stroke="#555" stroke-width="2"/></svg>
<div class="a" style="left:2px;top:831px;width:716px;height:259px;background:#fff;border:1.5px solid #a3a3a3;border-left:none"></div>
<div class="a" style="left:26.5px;top:833px;width:690px;height:82px;background:#eeeeee"></div>
<div class="a m" style="left:29.8px;top:835.00px;width:687px;overflow:hidden;color:#2a2a2a">Frame 77: 85 bytes on wire (680 bits), 85 bytes captured (680 bits) on interface</div>
<svg class="a" style="left:10px;top:838.0px" width="8" height="11" viewBox="0 0 8 11"><path d="M1.5 1 L6.5 5.5 L1.5 10" fill="none" stroke="#8a8a8a" stroke-width="1.6"/></svg>
<div class="a m" style="left:29.8px;top:855.50px;width:687px;overflow:hidden;color:#2a2a2a">EXPORTED_PDU</div>
<svg class="a" style="left:10px;top:858.5px" width="8" height="11" viewBox="0 0 8 11"><path d="M1.5 1 L6.5 5.5 L1.5 10" fill="none" stroke="#8a8a8a" stroke-width="1.6"/></svg>
<div class="a m" style="left:29.8px;top:876.00px;width:687px;overflow:hidden;color:#2a2a2a">Internet Protocol Version 4, Src: 172.16.0.1, Dst: 192.168.0.2</div>
<svg class="a" style="left:10px;top:879.0px" width="8" height="11" viewBox="0 0 8 11"><path d="M1.5 1 L6.5 5.5 L1.5 10" fill="none" stroke="#8a8a8a" stroke-width="1.6"/></svg>
<div class="a m" style="left:29.8px;top:896.50px;width:687px;overflow:hidden;color:#2a2a2a">Internet Control Message Protocol</div>
<svg class="a" style="left:10px;top:899.5px" width="8" height="11" viewBox="0 0 8 11"><path d="M1.5 1 L6.5 5.5 L1.5 10" fill="none" stroke="#8a8a8a" stroke-width="1.6"/></svg>
<div class="a" style="left:2px;top:1069px;width:715px;height:20px;background:#f0f0f0"></div>
<div class="a" style="left:22px;top:1069.5px;width:559px;height:19px;background:#cdcdcd"></div>
<svg class="a" style="left:7px;top:1074px" width="8" height="10" viewBox="0 0 8 10"><path d="M6 1 L2 5 L6 9" fill="none" stroke="#555" stroke-width="2"/></svg>
<svg class="a" style="left:703px;top:1074px" width="8" height="10" viewBox="0 0 8 10"><path d="M2 1 L6 5 L2 9" fill="none" stroke="#555" stroke-width="2"/></svg>
<div class="a" style="left:724px;top:831px;width:715px;height:259px;background:#fff;border:1.5px solid #a3a3a3;border-right:none"></div>
<div class="a" style="left:725.5px;top:832.5px;width:51px;height:256px;background:#f0f0f0"></div>
<div class="a" style="left:998.80px;top:869.30px;width:196.42px;height:18.80px;background:#0078d7"></div>
<div class="a" style="left:1297.70px;top:869.30px;width:68.32px;height:18.80px;background:#0078d7"></div>
<div class="a" style="left:785.30px;top:887.50px;width:409.92px;height:18.80px;background:#0078d7"></div>
<div class="a" style="left:1220.84px;top:887.50px;width:145.18px;height:18.80px;background:#0078d7"></div>
<div class="a" style="left:785.30px;top:905.70px;width:409.92px;height:18.80px;background:#0078d7"></div>
<div class="a" style="left:1220.84px;top:905.70px;width:145.18px;height:18.80px;background:#0078d7"></div>
<div class="a" style="left:785.30px;top:923.90px;width:119.56px;height:18.80px;background:#0078d7"></div>
<div class="a" style="left:1220.84px;top:923.90px;width:42.70px;height:18.80px;background:#0078d7"></div>
<div class="a m" style="left:734.06px;top:833.90px;color:#a8a8a8">0000</div>
<div class="a m" style="left:785.30px;top:833.90px;color:#2a2a2a">00 0c 00 04 69 70 00 00</div>
<div class="a m" style="left:998.80px;top:833.90px;color:#2a2a2a">00 00 00 00 45 00 00 49</div>
<div class="a m" style="left:1220.84px;top:833.90px;color:#2a2a2a"><span style="color:#a0a0a0">·</span><span style="color:#a0a0a0">·</span><span style="color:#a0a0a0">·</span><span style="color:#a0a0a0">·</span>ip<span style="color:#a0a0a0">·</span><span style="color:#a0a0a0">·</span></div>
<div class="a m" style="left:1297.70px;top:833.90px;color:#2a2a2a"><span style="color:#a0a0a0">·</span><span style="color:#a0a0a0">·</span><span style="color:#a0a0a0">·</span><span style="color:#a0a0a0">·</span>E<span style="color:#a0a0a0">·</span><span style="color:#a0a0a0">·</span>I</div>
<div class="a m" style="left:734.06px;top:852.10px;color:#a8a8a8">0010</div>
<div class="a m" style="left:785.30px;top:852.10px;color:#2a2a2a">00 00 00 00 40 01 0d f9</div>
<div class="a m" style="left:998.80px;top:852.10px;color:#2a2a2a">ac 10 00 01 c0 a8 00 02</div>
<div class="a m" style="left:1220.84px;top:852.10px;color:#2a2a2a"><span style="color:#a0a0a0">·</span><span style="color:#a0a0a0">·</span><span style="color:#a0a0a0">·</span><span style="color:#a0a0a0">·</span>@<span style="color:#a0a0a0">·</span><span style="color:#a0a0a0">·</span><span style="color:#a0a0a0">·</span></div>
<div class="a m" style="left:1297.70px;top:852.10px;color:#2a2a2a"><span style="color:#a0a0a0">·</span><span style="color:#a0a0a0">·</span><span style="color:#a0a0a0">·</span><span style="color:#a0a0a0">·</span><span style="color:#a0a0a0">·</span><span style="color:#a0a0a0">·</span><span style="color:#a0a0a0">·</span><span style="color:#a0a0a0">·</span></div>
<div class="a m" style="left:734.06px;top:870.30px;color:#4a4a4a">0020</div>
<div class="a m" style="left:785.30px;top:870.30px;color:#2a2a2a">08 00 32 88 00 00 00 01</div>
<div class="a m" style="left:998.80px;top:870.30px;color:#f4f8ff">39 30 31 32 33 34 35 36</div>
<div class="a m" style="left:1220.84px;top:870.30px;color:#2a2a2a"><span style="color:#a0a0a0">·</span><span style="color:#a0a0a0">·</span>2<span style="color:#a0a0a0">·</span><span style="color:#a0a0a0">·</span><span style="color:#a0a0a0">·</span><span style="color:#a0a0a0">·</span><span style="color:#a0a0a0">·</span></div>
<div class="a m" style="left:1297.70px;top:870.30px;color:#f4f8ff">90123456</div>
<div class="a m" style="left:734.06px;top:888.50px;color:#4a4a4a">0030</div>
<div class="a m" style="left:785.30px;top:888.50px;color:#f4f8ff">37 38 39 30 31 32 33 34</div>
<div class="a m" style="left:998.80px;top:888.50px;color:#f4f8ff">35 36 37 38 39 30 31 32</div>
<div class="a m" style="left:1220.84px;top:888.50px;color:#f4f8ff">78901234</div>
<div class="a m" style="left:1297.70px;top:888.50px;color:#f4f8ff">56789012</div>
<div class="a m" style="left:734.06px;top:906.70px;color:#4a4a4a">0040</div>
<div class="a m" style="left:785.30px;top:906.70px;color:#f4f8ff">33 34 35 36 37 38 39 30</div>
<div class="a m" style="left:998.80px;top:906.70px;color:#f4f8ff">31 32 33 34 35 36 37 38</div>
<div class="a m" style="left:1220.84px;top:906.70px;color:#f4f8ff">34567890</div>
<div class="a m" style="left:1297.70px;top:906.70px;color:#f4f8ff">12345678</div>
<div class="a m" style="left:734.06px;top:924.90px;color:#4a4a4a">0050</div>
<div class="a m" style="left:785.30px;top:924.90px;color:#f4f8ff">39 30 31 32 33</div>
<div class="a m" style="left:1220.84px;top:924.90px;color:#f4f8ff">90123</div>
<div class="a" style="left:0;top:1089px;width:1440px;height:28px;background:#f0f0f0"></div>
<div class="a" style="left:2px;top:1088px;width:716px;height:1.5px;background:#a8a8a8"></div>
<div class="a" style="left:724px;top:1088px;width:715px;height:1.5px;background:#a8a8a8"></div>
<svg class="a" style="left:12px;top:1095px" width="19" height="19" viewBox="0 0 19 19"><circle cx="9.5" cy="9" r="8" fill="#9fd3f2" stroke="#7a8a96" stroke-width="1.5"/></svg>
<svg class="a" style="left:41px;top:1094px" width="18" height="19" viewBox="0 0 18 19"><rect x="0.5" y="2.5" width="13" height="15" fill="#f3f3f3" stroke="#c9c9c9"/><rect x="1" y="3" width="12" height="4" fill="#5aa0dc"/><path d="M5 14 L15.5 3" stroke="#333" stroke-width="2.4" stroke-linecap="round"/></svg>
<div id="t21" class="a s" style="left:76.93px;top:1095px;font-size:13px;line-height:20px;color:#1a1a1a;transform:scaleX(1.0704);transform-origin:0 0;">nRF9160_modem_trace_test.pcapng</div>
<div class="a" style="left:953.5px;top:1094px;width:1px;height:19px;background:#a8a8a8"></div>
<div class="a" style="left:957.5px;top:1094px;width:1px;height:19px;background:#a8a8a8"></div>
<div class="a" style="left:1276.5px;top:1094px;width:1px;height:19px;background:#a8a8a8"></div>
<div class="a" style="left:1280.5px;top:1094px;width:1px;height:19px;background:#a8a8a8"></div>
<div id="t22" class="a s" style="left:973.00px;top:1095px;font-size:13px;line-height:20px;color:#1a1a1a;transform:scaleX(0.9907);transform-origin:0 0;">パケット数: 106 · 表示: 106 (100.0%)</div>
<div id="t23" class="a s" style="left:1294.06px;top:1095px;font-size:13px;line-height:20px;color:#1a1a1a;transform:scaleX(0.9365);transform-origin:0 0;">プロファイル: Default</div>
<div class="a" style="left:1417.5px;top:1093px;width:1px;height:20px;background:#dadada"></div>
<svg class="a" style="left:1423px;top:1102px" width="16" height="12" viewBox="0 0 16 12"><g fill="#b0b0b0"><rect x="12" y="0" width="2" height="2"/><rect x="8" y="4" width="2" height="2"/><rect x="12" y="4" width="2" height="2"/><rect x="4" y="8" width="2" height="2"/><rect x="8" y="8" width="2" height="2"/><rect x="12" y="8" width="2" height="2"/></g></svg>
<div class="a" style="left:0;top:0;width:2px;height:1089px;background:#2a6384"></div>
<div class="a" style="left:0;top:1089px;width:1.5px;height:28px;background:#a9bfd3"></div>
<div class="a" style="left:1439px;top:0;width:1px;height:124px;background:#e6e6e6"></div>
<div class="a" style="left:1439px;top:124px;width:1px;height:965px;background:#6f87a6"></div>
<div class="a" style="left:0;top:1115.5px;width:1440px;height:1.5px;background:#dfe9f4"></div>
</body></html>
